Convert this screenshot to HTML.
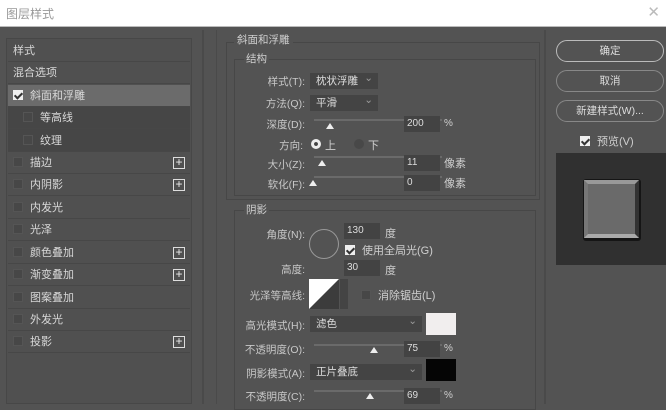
<!DOCTYPE html>
<html><head><meta charset="utf-8"><style>
*{margin:0;padding:0;box-sizing:border-box}
body{width:666px;height:404px;overflow:hidden;background:#535353;font-family:"Liberation Sans","Noto Sans CJK SC",sans-serif;font-size:11px;color:#cfcfcf;position:relative}
.a{position:absolute}
.title{left:0;top:0;width:666px;height:27px;background:#fff;border-bottom:1px solid #bbb}
.title span{position:absolute;left:6px;top:5px;font-size:12px;color:#999}
.x{right:6px;top:3px;color:#bbb;font-size:15px}
.row{position:absolute;left:8px;width:182px;height:22px;border-bottom:1px solid #474747;line-height:22px;padding-left:5px;font-size:11px;color:#d8d8d8}
.cb{display:inline-block;width:10px;height:10px;border:1px solid #555;background:#474747;vertical-align:-1px;margin-right:7px}
.ck{background:#eee;border-color:#eee;position:relative}
.ck:after{content:"";position:absolute;left:2px;top:0px;width:3px;height:6px;border:solid #333;border-width:0 2px 2px 0;transform:rotate(45deg)}
.plus{position:absolute;right:5px;top:5px;width:12px;height:12px;border:1px solid #ddd;text-align:center;line-height:9px;font-size:12px;color:#eee}
.lbl{position:absolute;text-align:right;width:90px;font-size:10.5px;color:#c8c8c8}
.sel{position:absolute;background:#444;height:16px;line-height:16px;padding-left:6px;color:#ddd;font-size:10.5px}
.sel:after{content:"⌄";position:absolute;right:5px;top:-3px;color:#999}
.inp{position:absolute;background:#434343;height:16px;line-height:16px;padding-left:3px;color:#ddd;font-size:10px;width:36px}
.track{position:absolute;height:2px;background:#6a6a6a}
.thumb{position:absolute;width:0;height:0;border-left:4px solid transparent;border-right:4px solid transparent;border-bottom:6px solid #eee}
.btn{position:absolute;left:556px;width:108px;height:22px;border:1px solid #888;border-radius:11px;text-align:center;line-height:20px;color:#ddd;font-size:10.5px}
</style></head><body>
<div class="a title"><span>图层样式</span></div>
<div class="a x">✕</div>

<div class="a" style="left:6px;top:38px;width:186px;height:366px;background:#505050;border:1px solid #474747"></div>
<div class="a" style="left:8px;top:107px;width:182px;height:45px;background:#464646"></div>
<div class="a" style="left:202px;top:30px;width:2px;height:374px;background:#4a4a4a"></div>
<div class="a" style="left:216px;top:30px;width:1px;height:374px;background:#4a4a4a"></div>
<div class="a" style="left:544px;top:30px;width:2px;height:374px;background:#4a4a4a"></div>

<div class="row" style="top:40px">样式</div>
<div class="row" style="top:62px">混合选项</div>
<div class="row" style="top:85px;background:#6b6b6b"><span class="cb ck"></span>斜面和浮雕</div>
<div class="row" style="top:107px;padding-left:15px;background:#464646"><span class="cb"></span>等高线</div>
<div class="row" style="top:130px;padding-left:15px;background:#464646"><span class="cb"></span>纹理</div>
<div class="row" style="top:152px"><span class="cb"></span>描边<span class="plus">+</span></div>
<div class="row" style="top:174px"><span class="cb"></span>内阴影<span class="plus">+</span></div>
<div class="row" style="top:197px"><span class="cb"></span>内发光</div>
<div class="row" style="top:219px"><span class="cb"></span>光泽</div>
<div class="row" style="top:242px"><span class="cb"></span>颜色叠加<span class="plus">+</span></div>
<div class="row" style="top:264px"><span class="cb"></span>渐变叠加<span class="plus">+</span></div>
<div class="row" style="top:287px"><span class="cb"></span>图案叠加</div>
<div class="row" style="top:309px"><span class="cb"></span>外发光</div>
<div class="row" style="top:331px"><span class="cb"></span>投影<span class="plus">+</span></div>

<div class="a" style="left:226px;top:42px;width:314px;height:158px;border:1px solid #474747"></div>
<div class="a" style="left:234px;top:32px;background:#535353;padding:0 3px;font-size:10.5px">斜面和浮雕</div>
<div class="a" style="left:234px;top:59px;width:302px;height:137px;border:1px solid #474747"></div>
<div class="a" style="left:244px;top:51px;background:#535353;padding:0 2px;font-size:10.5px">结构</div>

<div class="lbl" style="left:215px;top:74px">样式(T):</div>
<div class="sel" style="left:310px;top:73px;width:68px">枕状浮雕</div>
<div class="lbl" style="left:215px;top:96px">方法(Q):</div>
<div class="sel" style="left:310px;top:95px;width:68px">平滑</div>
<div class="lbl" style="left:215px;top:117px">深度(D):</div>
<div class="track" style="left:314px;top:119px;width:128px"></div>
<div class="thumb" style="left:326px;top:123px"></div>
<div class="inp" style="left:404px;top:116px">200</div>
<div class="a" style="left:444px;top:118px;font-size:10px">%</div>
<div class="lbl" style="left:215px;top:138px;width:88px">方向:</div>
<div class="a" style="left:311px;top:139px;width:10px;height:10px;border-radius:50%;background:#eee;border:3px solid #eee;box-shadow:inset 0 0 0 2px #444"></div>
<div class="a" style="left:325px;top:137px">上</div>
<div class="a" style="left:354px;top:139px;width:10px;height:10px;border-radius:50%;background:#484848"></div>
<div class="a" style="left:368px;top:137px">下</div>
<div class="lbl" style="left:215px;top:157px">大小(Z):</div>
<div class="track" style="left:314px;top:156px;width:128px"></div>
<div class="thumb" style="left:318px;top:160px"></div>
<div class="inp" style="left:404px;top:155px">11</div>
<div class="a" style="left:444px;top:155px">像素</div>
<div class="lbl" style="left:215px;top:177px">软化(F):</div>
<div class="track" style="left:314px;top:176px;width:128px"></div>
<div class="thumb" style="left:309px;top:180px"></div>
<div class="inp" style="left:404px;top:175px">0</div>
<div class="a" style="left:444px;top:175px">像素</div>

<div class="a" style="left:234px;top:210px;width:302px;height:200px;border:1px solid #474747"></div>
<div class="a" style="left:244px;top:202px;background:#535353;padding:0 2px;font-size:10.5px">阴影</div>
<div class="lbl" style="left:215px;top:227px">角度(N):</div>
<div class="a" style="left:309px;top:229px;width:30px;height:30px;border-radius:50%;border:1px solid #999"></div>
<div class="inp" style="left:344px;top:223px">130</div>
<div class="a" style="left:385px;top:225px">度</div>
<div class="a" style="left:345px;top:242px"><span class="cb ck"></span>使用全局光(G)</div>
<div class="lbl" style="left:215px;top:262px">高度:</div>
<div class="inp" style="left:344px;top:260px">30</div>
<div class="a" style="left:385px;top:262px">度</div>
<div class="lbl" style="left:215px;top:288px">光泽等高线:</div>
<div class="a" style="left:309px;top:279px;width:30px;height:30px;background:#3c3c3c;overflow:hidden"><svg width="30" height="30"><polygon points="0,0 30,0 0,30" fill="#fff"/></svg></div>
<div class="a" style="left:340px;top:279px;width:8px;height:30px;background:#444"></div>
<div class="a" style="left:361px;top:287px"><span class="cb"></span>消除锯齿(L)</div>
<div class="lbl" style="left:215px;top:318px">高光模式(H):</div>
<div class="sel" style="left:310px;top:316px;width:112px">滤色</div>
<div class="a" style="left:426px;top:313px;width:30px;height:22px;background:#f1eeee"></div>
<div class="lbl" style="left:215px;top:342px">不透明度(O):</div>
<div class="track" style="left:314px;top:344px;width:128px"></div>
<div class="thumb" style="left:370px;top:347px"></div>
<div class="inp" style="left:404px;top:341px">75</div>
<div class="a" style="left:444px;top:343px;font-size:10px">%</div>
<div class="lbl" style="left:215px;top:366px">阴影模式(A):</div>
<div class="sel" style="left:310px;top:364px;width:112px">正片叠底</div>
<div class="a" style="left:426px;top:359px;width:30px;height:22px;background:#050505"></div>
<div class="lbl" style="left:215px;top:389px">不透明度(C):</div>
<div class="track" style="left:314px;top:390px;width:128px"></div>
<div class="thumb" style="left:366px;top:393px"></div>
<div class="inp" style="left:404px;top:388px">69</div>
<div class="a" style="left:444px;top:390px;font-size:10px">%</div>

<div class="btn" style="top:40px;border-color:#bbb">确定</div>
<div class="btn" style="top:70px">取消</div>
<div class="btn" style="top:100px">新建样式(W)...</div>
<div class="a" style="left:580px;top:133px"><span class="cb ck"></span>预览(V)</div>
<div class="a" style="left:556px;top:153px;width:110px;height:112px;background:#303030"></div>
<div class="a" style="left:583px;top:179px;width:58px;height:62px;background:#151515;border-radius:3px"></div>
<div class="a" style="left:584px;top:180px;width:55px;height:58px;background:#6a6a6a;border:4px solid;border-color:#999 #333 #aaa #777"></div>
</body></html>
